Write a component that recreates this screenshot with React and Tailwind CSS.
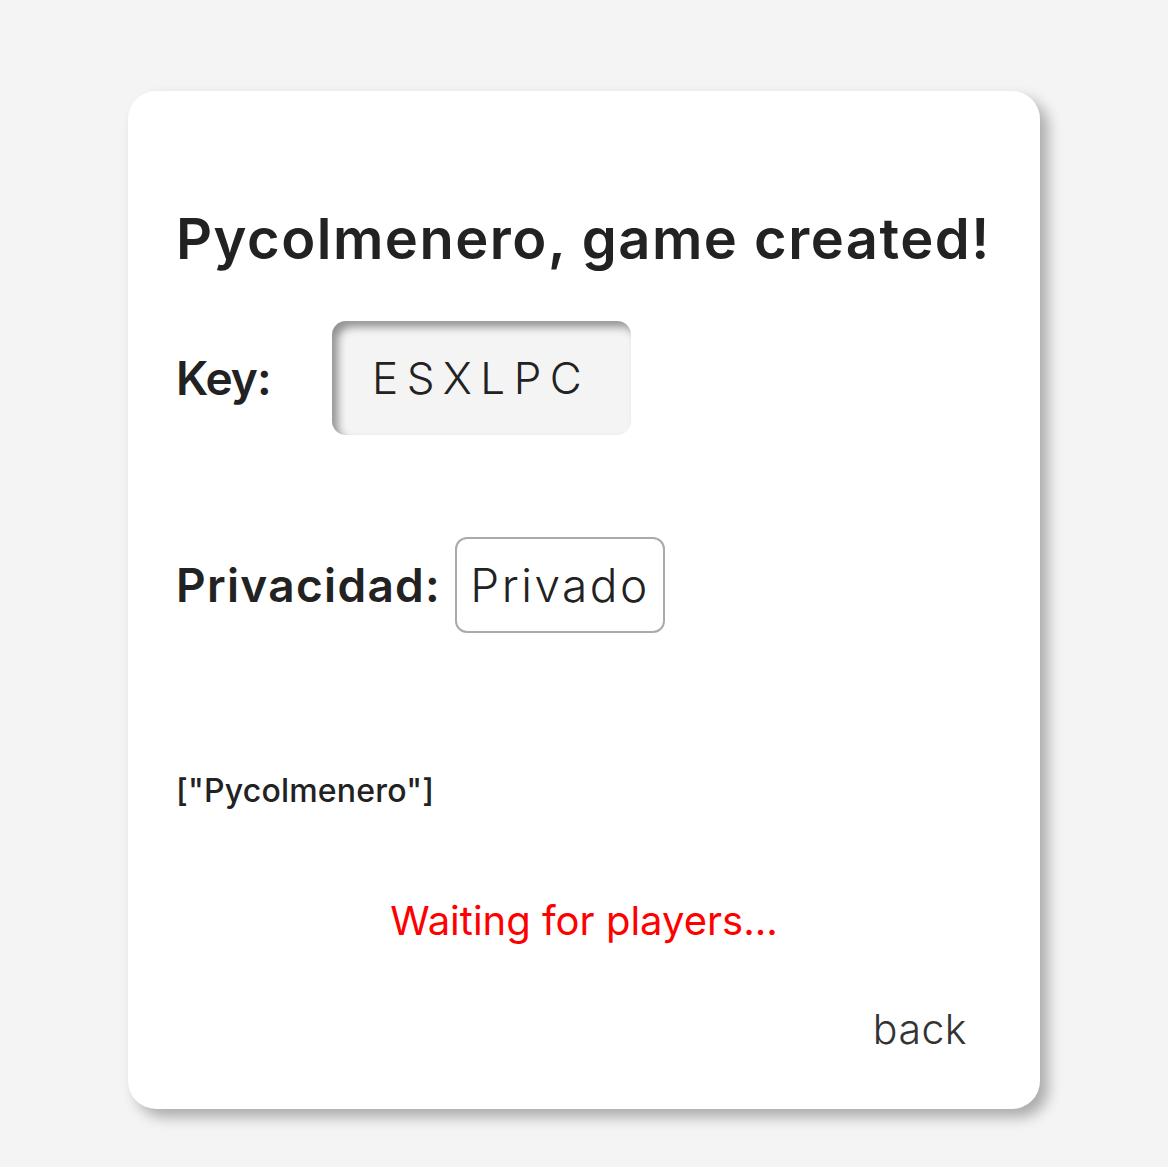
const players = ["Pycolmenero"];

const App = () => {
  return (
    <div className="min-h-screen w-full bg-[#f4f4f4] pt-[91px] pb-10 font-['Inter',sans-serif]">
      <div className="mx-auto flex h-[1018px] w-[912px] flex-col rounded-[28px] bg-white px-12 pt-[115px] shadow-[8px_8px_14px_rgba(0,0,0,0.3)]">
        <h1 className="text-[56px] font-semibold leading-[1.2] tracking-[1.5px] text-[#222]">
          Pycolmenero, game created!
        </h1>

        <div className="mt-12 flex items-center">
          <span className="w-[156px] text-[46px] font-semibold tracking-[-1px] text-[#222]">Key:</span>
          <div className="flex h-[114px] w-[299px] items-center rounded-[14px] bg-[#f4f4f4] pl-10 text-[44px] font-light tracking-[8.5px] text-[#222] shadow-[inset_6px_6px_8px_rgba(0,0,0,0.4)]">
            ESXLPC
          </div>
        </div>

        <div className="mt-[102px] flex items-center">
          <span className="mr-[14px] text-[46px] font-semibold tracking-[1.3px] text-[#222]">Privacidad:</span>
          <div className="flex h-[96px] w-[210px] items-center justify-center rounded-xl border-2 border-[#aaaaaa] text-[46px] font-light tracking-[2.5px] text-[#222]">
            Privado
          </div>
        </div>

        <p className="mt-[138px] text-[32px] font-medium leading-10 tracking-[0.2px] text-[#222]">
          {JSON.stringify(players)}
        </p>

        <p className="mt-[86px] text-center text-[40px] leading-[48px] text-[#ff0000]">
          Waiting for players...
        </p>

        <div className="mt-[60px] flex justify-end pr-[25px]">
          <button className="text-[41px] font-light leading-[48px] tracking-[0.5px] text-[#333]">back</button>
        </div>
      </div>
    </div>
  );
};

export default App;
